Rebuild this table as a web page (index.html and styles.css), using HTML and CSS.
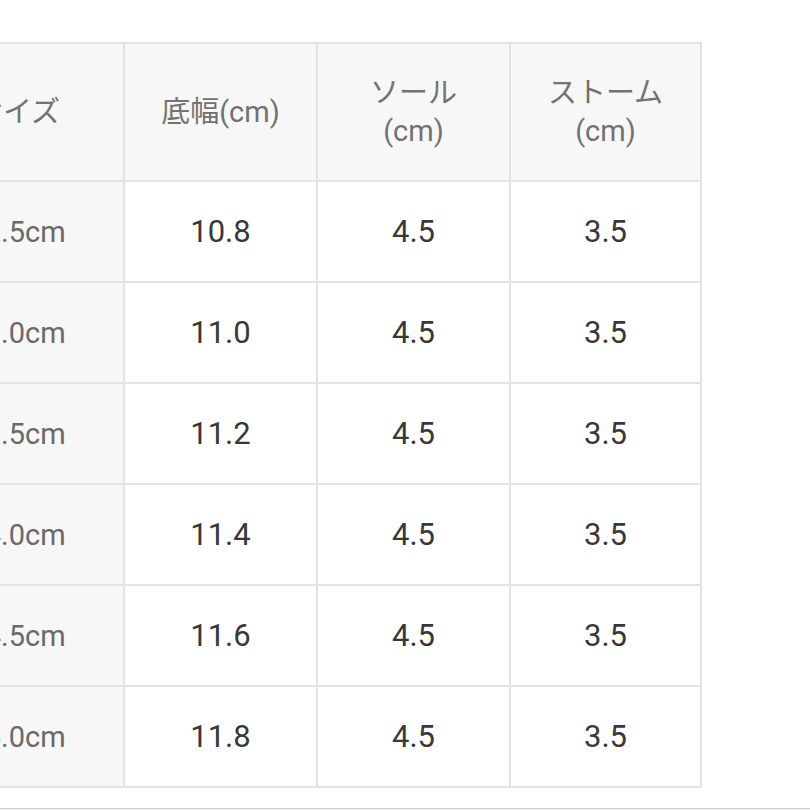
FILE: index.html
```html
<!DOCTYPE html>
<html lang="ja">
<head>
<meta charset="utf-8">
<title>サイズ表</title>
<link rel="stylesheet" href="styles.css">
</head>
<body>
<div class="page">
  <div class="table">
    <div class="cell head">サイズ</div>
    <div class="cell head">底幅(cm)</div>
    <div class="cell head">ソール<br>(cm)</div>
    <div class="cell head">ストーム<br>(cm)</div>

    <div class="cell label">22.5cm</div>
    <div class="cell">10.8</div>
    <div class="cell">4.5</div>
    <div class="cell">3.5</div>

    <div class="cell label">23.0cm</div>
    <div class="cell">11.0</div>
    <div class="cell">4.5</div>
    <div class="cell">3.5</div>

    <div class="cell label">23.5cm</div>
    <div class="cell">11.2</div>
    <div class="cell">4.5</div>
    <div class="cell">3.5</div>

    <div class="cell label">24.0cm</div>
    <div class="cell">11.4</div>
    <div class="cell">4.5</div>
    <div class="cell">3.5</div>

    <div class="cell label">24.5cm</div>
    <div class="cell">11.6</div>
    <div class="cell">4.5</div>
    <div class="cell">3.5</div>

    <div class="cell label">25.0cm</div>
    <div class="cell">11.8</div>
    <div class="cell">4.5</div>
    <div class="cell">3.5</div>
  </div>
  <div class="footer"></div>
</div>
</body>
</html>
```
FILE: styles.css
```css
html, body {
  margin: 0;
  padding: 0;
  background: #ffffff;
  overflow: hidden;
}
.page {
  width: 810px;
  height: 810px;
  padding-top: 42px;
  box-sizing: border-box;
  font-family: Roboto, "Noto Sans CJK JP", sans-serif;
}
.table {
  display: grid;
  grid-template-columns: 212px 191px 191px 189px;
  grid-template-rows: 136px repeat(6, 99px);
  gap: 2px;
  padding: 2px;
  background: #e3e3e3;
  width: max-content;
  margin-left: -91px;
}
.cell {
  background: #ffffff;
  display: flex;
  align-items: center;
  justify-content: center;
  text-align: center;
  font-size: 31px;
  color: #383838;
  line-height: 38px;
}
.head {
  background: #f7f7f7;
  color: #727272;
  font-size: 29px;
}
.label {
  background: #f7f7f7;
  color: #6a6a6a;
  font-size: 29px;
}
.footer {
  margin-top: 20px;
  border-top: 1px solid #cccccc;
  height: 40px;
  background: #f6f6f6;
}
```
